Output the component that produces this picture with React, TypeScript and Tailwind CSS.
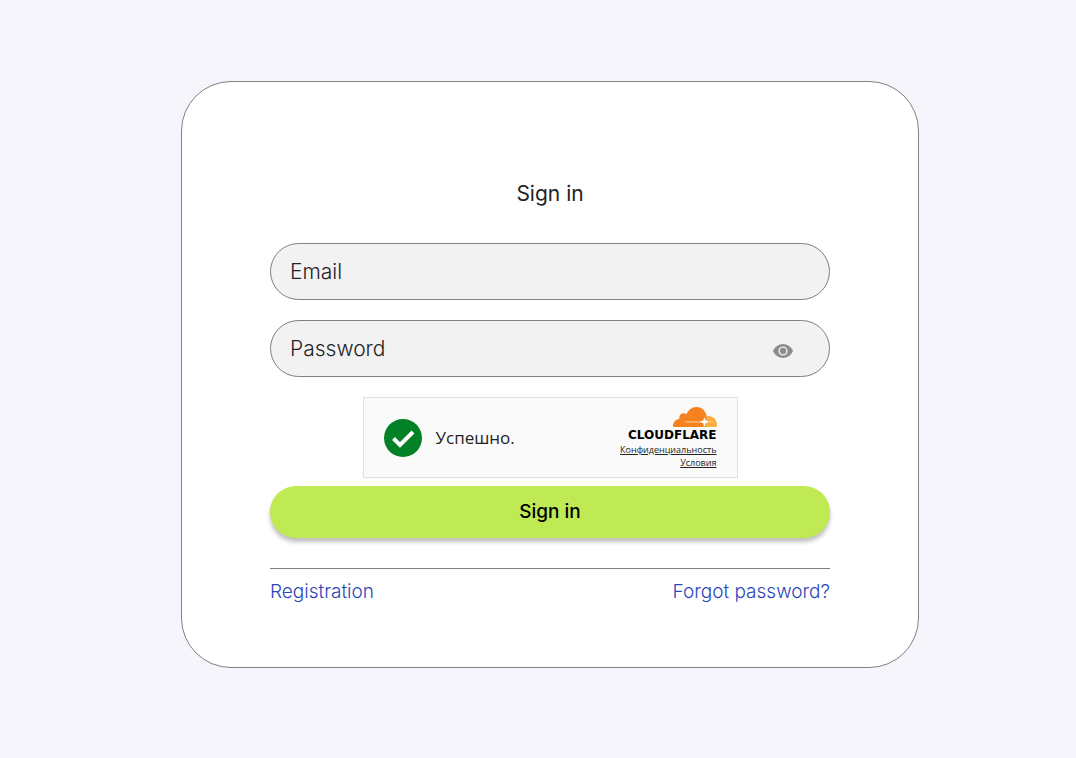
import React, { useState } from "react";

const CloudflareCloud = () => {
  return (
    <svg viewBox="0 0 45 20" className="w-[45px] h-5" aria-hidden="true">
      <path
        fill="#FBAD41"
        d="M28 20L35 9C36.5 8.8 38.5 8.9 40 9.7C43.2 11.2 45 14 44.9 17.3C44.9 18.2 44.8 19 44.6 19.6C44.5 19.9 44.3 20 44 20Z"
      />
      <path
        fill="#F6821F"
        d="M1.6 20C1.3 20 1.1 19.8 1.1 19.5C0.6 15.4 3.5 12.2 7.4 12C6.8 8.9 8.6 6.5 11.2 6.2C12.5 6.1 13.7 6.4 14.7 7.1C16.2 2.9 19.9 0 24.3 0C29.4 0 33.4 3.4 34.5 8.2C34.8 9.6 34.5 11 33.6 12.4L31 19.5C30.9 19.8 30.7 20 30.4 20Z"
      />
      <path fill="#FCE0C2" d="M12.5 14.6L31 14.4V15.4L13 15.2Z" />
      <path fill="#FDE8CF" d="M34 14.3L42.5 14.7L34 15.3Z" />
      <path
        fill="#fff"
        d="M32.4 10.2L33.5 13.3L36.8 14.8L33.5 16.2L32.4 19.4L31.3 16.2L28 14.8L31.3 13.3Z"
      />
    </svg>
  );
};

const Captcha = () => {
  return (
    <div className="flex items-center justify-between w-full max-w-[375px] h-[81px] mx-auto mt-5 px-5 border border-[#e0e0e0] bg-[#fafafa] text-[#232323] font-['Open_Sans',sans-serif]">
      <div className="flex items-center gap-[14px]">
        <svg viewBox="0 0 38 38" className="w-[38px] h-[38px]" aria-hidden="true">
          <circle cx="19" cy="19" r="19" fill="#038127" />
          <path d="M9.5 19.5L16 26L29 13" fill="none" stroke="#fff" strokeWidth="4" />
        </svg>
        <p className="text-[17px] leading-6">Успешно.</p>
      </div>
      <div className="flex flex-col items-end text-[9px] leading-[13px]">
        <CloudflareCloud />
        <p className="font-['DejaVu_Sans',sans-serif] font-bold text-[12px] leading-4 text-black">
          CLOUDFLARE
        </p>
        <a href="#privacy" className="underline">Конфиденциальность</a>
        <a href="#terms" className="underline">Условия</a>
      </div>
    </div>
  );
};

const App = () => {
  const [showPassword, setShowPassword] = useState(false);

  return (
    <div className="min-h-screen bg-[#f6f5fc] pt-[81px] pb-20 pl-6 font-['Inter',sans-serif] text-[#232323]">
      <div className="w-full max-w-[738px] mx-auto bg-white border border-[#808080] rounded-[50px] px-[88px] pt-[98px] pb-[61px]">
        <h1 className="text-[21px] leading-7 text-center">Sign in</h1>
        <form className="mt-[35px]" onSubmit={(e) => e.preventDefault()}>
          <input
            type="email"
            aria-label="Email"
            placeholder="Email"
            className="block w-full h-[57px] px-[19px] rounded-full border border-[#808080] bg-[#f2f2f2] text-[21px] font-light placeholder:text-[#232323]"
          />
          <div className="flex items-center h-[57px] mt-5 pl-[19px] pr-9 rounded-full border border-[#808080] bg-[#f2f2f2]">
            <input
              type={showPassword ? "text" : "password"}
              aria-label="Password"
              placeholder="Password"
              className="grow min-w-0 h-full bg-transparent text-[21px] font-light placeholder:text-[#232323]"
            />
            <button
              type="button"
              aria-label="Show password"
              className="pt-1"
              onClick={() => setShowPassword(!showPassword)}
            >
              <svg viewBox="0 0 20 14" className="w-5 h-[14px]" aria-hidden="true">
                <path fill="#8c8d91" d="M10 0C5.5 0 1.7 2.9 0 7C1.7 11.1 5.5 14 10 14S18.3 11.1 20 7C18.3 2.9 14.5 0 10 0Z" />
                <circle cx="10" cy="7" r="3.9" fill="#8c8d91" stroke="#f2f2f2" strokeWidth="1.4" />
              </svg>
            </button>
          </div>
          <Captcha />
          <button
            type="submit"
            className="block w-full h-[52px] mt-2 rounded-full bg-[#bfea54] text-[19px] font-medium text-black shadow-[0_4px_4px_rgba(0,0,0,0.25)]"
          >
            Sign in
          </button>
        </form>
        <div className="flex justify-between mt-[30px] pt-[9px] border-t border-[#808080] text-[19px] leading-7 font-light text-[#2b46b9]">
          <a href="#registration">Registration</a>
          <a href="#forgot">Forgot password?</a>
        </div>
      </div>
    </div>
  );
};

export default App;
